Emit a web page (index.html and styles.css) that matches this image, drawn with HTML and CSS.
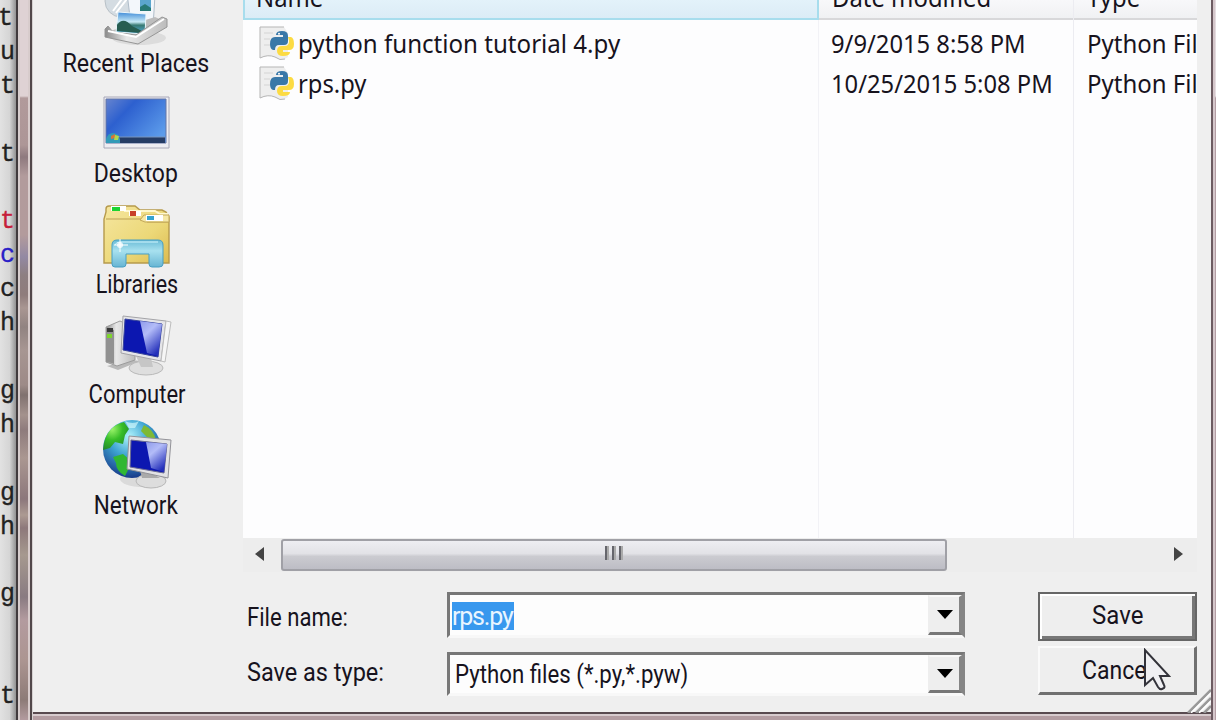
FILE: index.html
```html
<!DOCTYPE html>
<html lang="en">
<head>
<meta charset="utf-8">
<title>Save As</title>
<link rel="stylesheet" href="styles.css">
</head>
<body>
<div class="screen">
  <pre class="code">t
u
t

t

<b class="red">t</b>
<b class="blue">c</b>
c
h

g
h

g
h

g


t</pre>
  <div class="frame-left"></div>
  <div class="window">
    <main class="dialog">
      <nav class="places">
        <div class="place"><svg class="pic" viewBox="0 0 76 72">
          <defs>
            <linearGradient id="sky" x2="0" y2="1"><stop offset="0" stop-color="#3f8bd8"/><stop offset=".45" stop-color="#c8eaf6"/><stop offset=".6" stop-color="#387a73"/><stop offset="1" stop-color="#55aee0"/></linearGradient>
            <linearGradient id="blue" x2="1" y2=".7"><stop offset="0" stop-color="#6684cf"/><stop offset=".35" stop-color="#2d60cf"/><stop offset="1" stop-color="#5c9bea"/></linearGradient>
            <linearGradient id="folder" x2="1" y2="1"><stop offset="0" stop-color="#f5e6a0"/><stop offset=".6" stop-color="#ecd878"/><stop offset="1" stop-color="#dcbb50"/></linearGradient>
            <linearGradient id="glass" x2="0" y2="1"><stop offset="0" stop-color="#69bbd6"/><stop offset=".4" stop-color="#a8e1ef"/><stop offset="1" stop-color="#67b5d3"/></linearGradient>
            <linearGradient id="shine" x2=".6" y2="1"><stop offset="0" stop-color="#8f9bea"/><stop offset=".4" stop-color="#b3bcf8"/><stop offset="1" stop-color="#2430bb"/></linearGradient>
            <linearGradient id="metal" x2="1" y2="0"><stop offset="0" stop-color="#8b8b8b"/><stop offset=".35" stop-color="#e8e8e8"/><stop offset="1" stop-color="#bcbcbc"/></linearGradient>
            <radialGradient id="globe" cx=".45" cy=".28" r=".75"><stop offset="0" stop-color="#b0f3fc"/><stop offset=".45" stop-color="#3da3d1"/><stop offset="1" stop-color="#163385"/></radialGradient>
            <radialGradient id="land" cx=".35" cy=".25" r=".8"><stop offset="0" stop-color="#9df56b"/><stop offset=".5" stop-color="#36bd27"/><stop offset="1" stop-color="#22882c"/></radialGradient>
          </defs>
          <ellipse cx="43" cy="63" rx="27" ry="7" fill="#dcdcdc"/>
          <circle cx="25" cy="26" r="16" fill="#d4dce2" stroke="#b9c1c7"/><path d="M17 36L31 17M20 38L34 20" stroke="#fff" stroke-width="2"/>
          <path d="M31 18l28 2-2 32-22-2z" fill="#f3f7fb" stroke="#aebcc8"/>
          <path d="M44 25h11v11H44z" fill="#5ba6ce"/><path d="M44 32l5-3 6 4v3H44z" fill="#277975"/>
          <path d="M11 57l48-15 9 4-28 19-26-5z" fill="#bdbdbd"/>
          <path d="M22 37l28 2-1 20-29-2z" fill="url(#sky)" stroke="#ecf7fb"/>
          <path d="M21 50q6-9 15 1l10 5-2 2-23-2z" fill="#275d51"/>
          <path d="M9 54l3-3 5 6 23 3 26-18 5 2v8L42 69 9 62z" fill="url(#metal)" stroke="#969696"/>
          <path d="M12 56l28 6 28-18" fill="none" stroke="#fff" stroke-width="2"/>
        </svg><span class="label l1">Recent Places</span></div>
        <div class="place"><svg class="pic" viewBox="0 0 76 72">
          <path d="M8 12h65v51H8z" fill="#ededf2" stroke="#a8a8b8"/><path d="M10 14h60v44H10z" fill="url(#blue)" stroke="#6676a5"/>
          <path d="M11 52h58v6H11z" fill="#253c65"/><path d="M12 52h57" stroke="#7894be"/>
          <path d="M10 54q2-6 7-6t7 6v4H10z" fill="#329ab8"/><path d="M15 51l4-2v4l-4 1z" fill="#d6753a"/><path d="M19 50l4 1-1 4h-4z" fill="#b2d64c"/>
        </svg><span class="label l2">Desktop</span></div>
        <div class="place"><svg class="pic" viewBox="0 -4 76 72">
          <path d="M8 63V19l2-7V9q0-3 3-3h26l5 4h22l4 2 3 5v46z" fill="url(#folder)" stroke="#b69a4c" stroke-width="1.4"/>
          <path d="M10 19h38l3 3h22" fill="none" stroke="#bda154"/><path d="M28 11h31l5 3h8" stroke="#fff8cf" stroke-width="2" fill="none"/>
          <path d="M44 20l4-5h25v7H49z" fill="#f6e8a6" stroke="#c3a858"/><path d="M15 6h15v5H15z" fill="#fff"/><path d="M16 7h8v4h-8z" fill="#1bd332"/>
          <path d="M33 11h12v5H33z" fill="#fff"/><path d="M34 11h6v5h-6z" fill="#c84028"/><path d="M50 15h17v6H50z" fill="#fff"/><path d="M51 16h7v4h-7z" fill="#35a3ce"/>
          <path d="M16 45q0-5 5-5h41q5 0 5 5v19q0 3-4 3h-7q-3 0-3-3V54H30v10q0 3-3 3h-8q-3 0-3-3z" fill="url(#glass)" stroke="#489fc3"/>
          <path d="M19 45q1-3 5-3h38" stroke="#d2f6ff" fill="none"/><path d="M18 45h14M24 39v13" stroke="#fff"/><circle cx="24" cy="45" r="3" fill="#fff" opacity=".8"/>
        </svg><span class="label l3">Libraries</span></div>
        <div class="place"><svg class="pic" viewBox="0 0 76 72">
          <path d="M11 60l25-6 8 1-22 9z" fill="#b9b9b9"/><path d="M10 21l14-6 15 7v32L21 60l-11-4z" fill="url(#metal)" stroke="#9c9c9c"/>
          <path d="M10 22l8 2v34l-8-3z" fill="#919191"/><path d="M11 22h6v4h-6z" fill="#383838"/><path d="M11 28h5v4h-5z" fill="#7ed42e"/>
          <ellipse cx="50" cy="62" rx="17" ry="7" fill="#dedede" stroke="#b9b9b9"/><path d="M40 50l15 2 2 9H45z" fill="#c6c6c6"/>
          <path d="M27 10l43 5-5 40-40-8z" fill="#e5e5e8" stroke="#a4a4a8"/><path d="M70 15l5 1-6 40-4-1z" fill="#f6f6f6" stroke="#bdbdbd"/>
          <path d="M29 13l37 5-4 33-35-7z" fill="#0c17b0" stroke="#38459b"/><path d="M44 15l22 3-4 32-11-3z" fill="url(#shine)"/>
        </svg><span class="label l4">Computer</span></div>
        <div class="place"><svg class="pic" viewBox="0 0 76 72">
          <ellipse cx="47" cy="62" rx="23" ry="8" fill="#dadada"/><circle cx="36" cy="32" r="29" fill="url(#globe)"/>
          <path d="M8 26Q12 9 28 5l5 7-4 6-2 9-8-2-5 6-7 2z" fill="url(#land)"/><path d="M17 40l10-3 9 8-7 14q-9-5-9-13z" fill="#30b733"/><path d="M48 8q10 5 12 15l-9-3-6-6z" fill="#7eb935"/>
          <path d="M29 4q8 4 14 0l-4 7h-6z" fill="#dfffff" opacity=".6"/>
          <ellipse cx="55" cy="64" rx="15" ry="7" fill="#ddd" stroke="#b7b7b7"/><path d="M44 53l13 4 7 4H46z" fill="#aaa"/>
          <path d="M33 19l42 4-3 38-41-9z" fill="#e2e2e4" stroke="#929298"/>
          <path d="M35 23l36 4-3 29-34-6z" fill="#0c17b0" stroke="#6b6c91"/><path d="M50 25l21 2-3 28-13-4z" fill="url(#shine)"/>
        </svg><span class="label l5">Network</span></div>
      </nav>
      <section class="content">
        <div class="files">
          <div class="col name"><div class="head"><span>Name</span></div>
            <div class="row"><svg class="py" viewBox="0 0 36 36"><use href="#pyfile"/></svg><span class="f1">python function tutorial 4.py</span></div>
            <div class="row"><svg class="py" viewBox="0 0 36 36"><g id="pyfile"><path d="M2 2h24l4 6v24q-7 5-13 0-7-3-15 1z" fill="#eee"/><path d="M2 33V2h24M2 33q8-4 15-1 5 4 10 2" fill="none" stroke="#b5b5b5"/><path d="M6 8h9M6 14h6M6 20h6" stroke="#d4d4d4"/>
              <path d="M17 12h8v-2h-7q0-4 6-4 6 0 6 5v5q0 4-4 4h-5q-4 0-4 5h-2q-3-1-3-6 0-7 5-7z" fill="#3978a8"/><path d="M30 12h3q3 1 3 7t-5 6h-6v2h7q0 4-7 4-6 0-6-5 0-5 5-5h3q4 0 4-5z" fill="#fcdb43"/><circle cx="21" cy="8.7" r="1" fill="#fff"/></g></svg><span class="f2">rps.py</span></div>
          </div>
          <div class="col date"><div class="head"><span>Date modified</span></div>
            <div class="row"><span>9/9/2015 8:58 PM</span></div><div class="row"><span>10/25/2015 5:08 PM</span></div></div>
          <div class="col type"><div class="head"><span>Type</span></div>
            <div class="row"><span>Python Fil</span></div><div class="row"><span>Python Fil</span></div></div>
        </div>
        <div class="scroll"><svg class="arrow" viewBox="0 0 10 14"><path d="M9 0v14L0 7z"/></svg><div class="thumb"><i></i><i></i><i></i></div><svg class="arrow right" viewBox="0 0 10 14"><path d="M0 0v14l9-7z"/></svg></div>
        <div class="form">
          <div class="captions"><span class="c1">File name:</span><span class="c2">Save as type:</span></div>
          <div class="combos">
            <div class="combo first"><div class="value"><span class="selected">rps.py</span></div><div class="drop"><svg viewBox="0 0 16 9"><path d="M0 0h16L8 9z"/></svg></div></div>
            <div class="combo"><div class="value"><span class="filter">Python files (*.py,*.pyw)</span></div><div class="drop"><svg viewBox="0 0 16 9"><path d="M0 0h16L8 9z"/></svg></div></div>
          </div>
          <div class="buttons"><div class="button save"><span>Save</span></div><div class="button"><span>Cancel</span></div></div>
        </div>
      </section>
    </main>
    <div class="frame-bottom"></div>
  </div>
  <div class="frame-right"></div>
  <svg class="grip" viewBox="0 0 24 24"><path d="M1 24L24 1M9 24L24 9M17 24l7-7" stroke="#999" stroke-width="2.5"/><path d="M4 24L24 4M12 24l12-12" stroke="#fff" stroke-width="1.5"/></svg>
  <svg class="cursor" viewBox="0 0 28 43"><path d="M2 2v35l8-7 5 9q2 3 4 2l2-1q1-1 0-3l-4-9h9z" fill="#f0f0f3" stroke="#33333a" stroke-width="2"/></svg>
</div>
</body>
</html>
```
FILE: styles.css
```css
* { box-sizing: border-box; }
body { margin: 0; overflow: hidden; background: #efefef; color: #17131d; }
.screen { position: relative; display: flex; width: 1216px; height: 720px; overflow: hidden; }
.code { width: 16px; flex: none; margin: 0; padding-top: 2px; overflow: hidden; font: 25px/33.9px "Liberation Mono", monospace; color: #222; background: linear-gradient(90deg, #e2e2e2, #d5d5d5 60%, #929292); text-indent: -2px; -webkit-text-stroke: .3px; }
.code b { font-weight: normal; }
.red { color: #c6203b; }
.blue { color: #2a20c7; }
.frame-left { width: 17px; flex: none; background:
  linear-gradient(90deg, #413b3d 0 2px, #d7cdcd 2px 4px, transparent 4px 12px, #d8cccc 12px 14px, #51474a 14px 16px, #d5d1d1 16px),
  linear-gradient(#dfd2d4 0, #dfd2d4 96px, #b19a9b 98px, #ad9697 145px, #8e797e 157px, #b29b9c 176px, #b39b9c 235px, #9389a3 257px, #8d7f81 275px, #8f7c7c 295px, #a99692 308px, #918381 327px, #a79692 350px, #9d8a87 385px, #80716f 395px, #a4928d 415px, #8e7b7c 430px, #aa9791 458px, #8c777b 499px, #ac9a92 515px, #8d787a 528px, #a6998f 555px, #897b81 597px, #b39b9f 620px, #ac9591 660px, #8d7b77 700px, #b39b9f 720px); }
.window { width: 1178px; flex: none; }
.dialog { display: flex; height: 712px; background: #efefef; }
.frame-bottom { height: 8px; background: linear-gradient(#584a4f 0 2px, #d7cbce 2px 4px, #b39da2 4px); }
.frame-right { flex: 1; background: linear-gradient(90deg, #6d5c62 0 2px, #d5c7cb 2px 4px, transparent 4px), linear-gradient(#e5dce0 0 96px, #b49ea5 98px); }
.places { width: 210px; flex: none; margin-top: -25px; padding-right: 4px; }
.place { height: 110.4px; display: flex; flex-direction: column; align-items: center; }
.pic { width: 76px; height: 72px; flex: none; margin-left: -5px; }
.label { line-height: 34px; }
.label, .form { font-family: Roboto, "Liberation Sans", sans-serif; font-size: 25px; }
.l1 { transform: scaleX(.93); }
.l2 { transform: scaleX(.92); }
.l3 { transform: translateX(1px) scaleX(.86); }
.l4 { transform: translateX(1px) scaleX(.88); }
.l5 { transform: scaleX(.9); }
.label, .captions, .combos, .buttons { white-space: nowrap; }
.content { width: 954px; }
.files { display: flex; height: 538px; background: #fdfdfe; font: 25px/40px "Noto Sans", "Open Sans", sans-serif; overflow: hidden; }
.col { height: 538px; overflow: hidden; white-space: nowrap; }
.name { width: 576px; background: linear-gradient(#f2f2f6, #f2f2f6) 575px 0 / 1px 100% no-repeat; }
.date { width: 255px; border-right: 1px solid #ececf1; }
.type { width: 123px; }
.head { height: 20px; border-bottom: 2px solid #d8d8da; background: linear-gradient(#f8f8fa, #f0f1f3); padding-left: 13px; overflow: hidden; margin-bottom: 3px; }
.head span { display: block; margin-top: -23px; transform-origin: 0 50%; transform: scaleX(.955); }
.name .head { background: linear-gradient(#e3f2fa, #dbecf6); border: solid #a7dded; border-width: 0 2px 2px; padding-left: 11px; }
.row { display: flex; align-items: center; height: 40px; padding-left: 12px; }
.row span, .captions span, .filter, .button span { display: block; transform-origin: 0 50%; transform: scaleX(.95); }
.row .f1 { transform: scaleX(.964); }
.name .row { padding-left: 15px; gap: 4px; }
.type .row span { transform: scaleX(.96); }
.type .row { padding-left: 13px; }
.py { width: 36px; height: 36px; flex: none; }
.scroll { height: 34px; display: flex; align-items: center; padding: 1px 13px 3px 12px; background: #ededed; }
.arrow { width: 10px; height: 14px; fill: #444; }
.thumb { width: 666px; height: 32px; margin: 2px auto 0 16px; border: 2px solid #a0a0a6; border-radius: 3px; background: linear-gradient(#eeeef2, #e2e2e6 45%, #cbcbd0 55%, #bdbdc5); display: flex; justify-content: center; gap: 3px; padding-top: 5px; }
.thumb i { width: 4px; height: 14px; background: linear-gradient(90deg, #66666c 0 2px, #aaa 2px); }
.form { display: flex; height: 122px; padding-top: 20px; }
.captions { width: 204px; padding: 9px 0 0 4px; line-height: 34px; }
.captions span { margin-bottom: 21px; }
.captions .c1 { transform: scaleX(.885); }
.captions .c2 { transform: scaleX(.94); }
.combos { width: 519px; }
.combo { display: flex; height: 44px; width: 518px; border: 3px solid; border-color: #777 #858585 #f8f8f8 #777; background: #fdfdfd; }
.combo.first { height: 46px; margin-bottom: 14px; }
.value { flex: 1; padding-left: 2px; display: flex; align-items: center; }
.selected { width: 62px; height: 28px; line-height: 30px; color: #e9f5ff; background: #3898ee; margin-top: 2px; letter-spacing: -1.2px; }
.filter { margin: 1px 0 0 3px; }
.filter.filter { transform: scaleX(.89); }
.drop { width: 34px; background: #eee; border: solid; border-width: 2px 3px 3px 2px; border-color: #f8f8f8 #858585 #777 #eee; display: flex; justify-content: center; align-items: center; }
.drop svg { width: 16px; height: 9px; }
.buttons { width: 159px; margin-left: 72px; }
.button { width: 159px; height: 49px; display: flex; justify-content: center; align-items: center; background: #eee; border: solid; border-width: 2px 3px 3px 2px; border-color: #fafafa #707070 #707070 #fafafa; }
.button span { transform-origin: 50% 50%; transform: scaleX(.92); }
.button.save { margin-bottom: 5px; border: 2px solid #666; box-shadow: inset 2px 2px #fff, inset -3px -3px #777; }
.button.save span { transform: scaleX(.96); margin-top: -2px; }
.grip { position: absolute; left: 1187px; top: 689px; width: 24px; height: 24px; }
.cursor { position: absolute; left: 1143px; top: 648px; width: 28px; height: 43px; }
```
